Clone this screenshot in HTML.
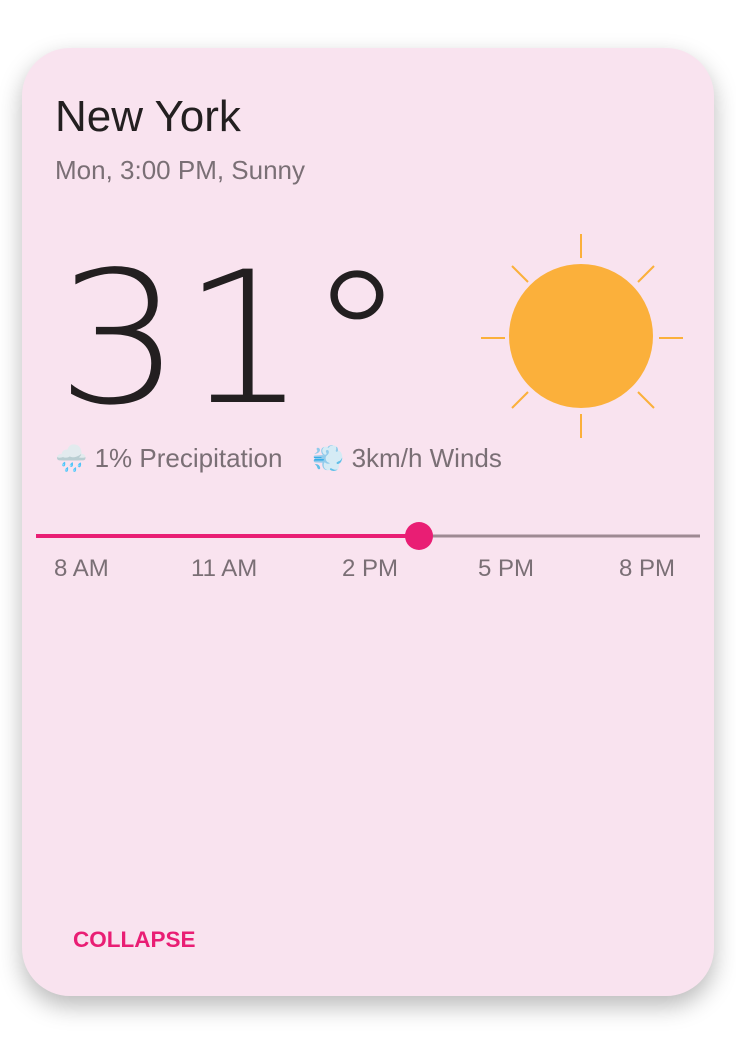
<html><head><style>
body{margin:0;width:736px;height:1044px;background:#fff;position:relative;font-family:"Liberation Sans",sans-serif;overflow:hidden}
.card{position:absolute;left:22px;top:48px;width:692px;height:948px;background:#f9e3ef;border-radius:48px;box-shadow:0 10px 24px rgba(0,0,0,0.28)}
.t{position:absolute;white-space:nowrap}
</style></head><body>
<div class="card"></div>
<div class="t" style="left:55px;top:92px;font-size:44px;color:#231f20">New York</div>
<div class="t" style="left:55px;top:155px;font-size:26px;color:#7a6f75">Mon, 3:00 PM, Sunny</div>
<div class="t" style="left:56px;top:248px;font-size:183px;color:#231f20;font-family:'DejaVu Sans','Liberation Sans',sans-serif;font-weight:200;letter-spacing:0px;line-height:1;transform:scaleX(1.08);transform-origin:left">31°</div>
<svg style="position:absolute;left:0;top:0" width="736" height="1044">
<circle cx="581" cy="336" r="72" fill="#fbb03b"/>
<g stroke="#fbb03b" stroke-width="2">
<line x1="581" y1="234" x2="581" y2="258"/><line x1="581" y1="414" x2="581" y2="438"/>
<line x1="481" y1="338" x2="505" y2="338"/><line x1="659" y1="338" x2="683" y2="338"/>
<line x1="512" y1="266" x2="528" y2="282"/><line x1="654" y1="266" x2="638" y2="282"/>
<line x1="512" y1="408" x2="528" y2="392"/><line x1="654" y1="408" x2="638" y2="392"/>
</g>
<line x1="36" y1="536" x2="419" y2="536" stroke="#e91e74" stroke-width="4"/>
<line x1="419" y1="536" x2="700" y2="536" stroke="#9e8a93" stroke-width="3"/>
<circle cx="419" cy="536" r="14" fill="#e91e74"/>
</svg>
<div class="t" style="left:55px;top:443px;font-size:26px;color:#7a6f75">🌧️ 1% Precipitation</div>
<div class="t" style="left:312px;top:443px;font-size:26px;color:#7a6f75">💨 3km/h Winds</div>
<div class="t" style="left:54px;top:555px;font-size:24px;color:#7a6f75">8 AM</div>
<div class="t" style="left:191px;top:555px;font-size:24px;color:#7a6f75">11 AM</div>
<div class="t" style="left:342px;top:555px;font-size:24px;color:#7a6f75">2 PM</div>
<div class="t" style="left:478px;top:555px;font-size:24px;color:#7a6f75">5 PM</div>
<div class="t" style="left:619px;top:555px;font-size:24px;color:#7a6f75">8 PM</div>
<div class="t" style="left:73px;top:927px;font-size:22.5px;color:#e91e74;font-weight:bold">COLLAPSE</div>
</body></html>
